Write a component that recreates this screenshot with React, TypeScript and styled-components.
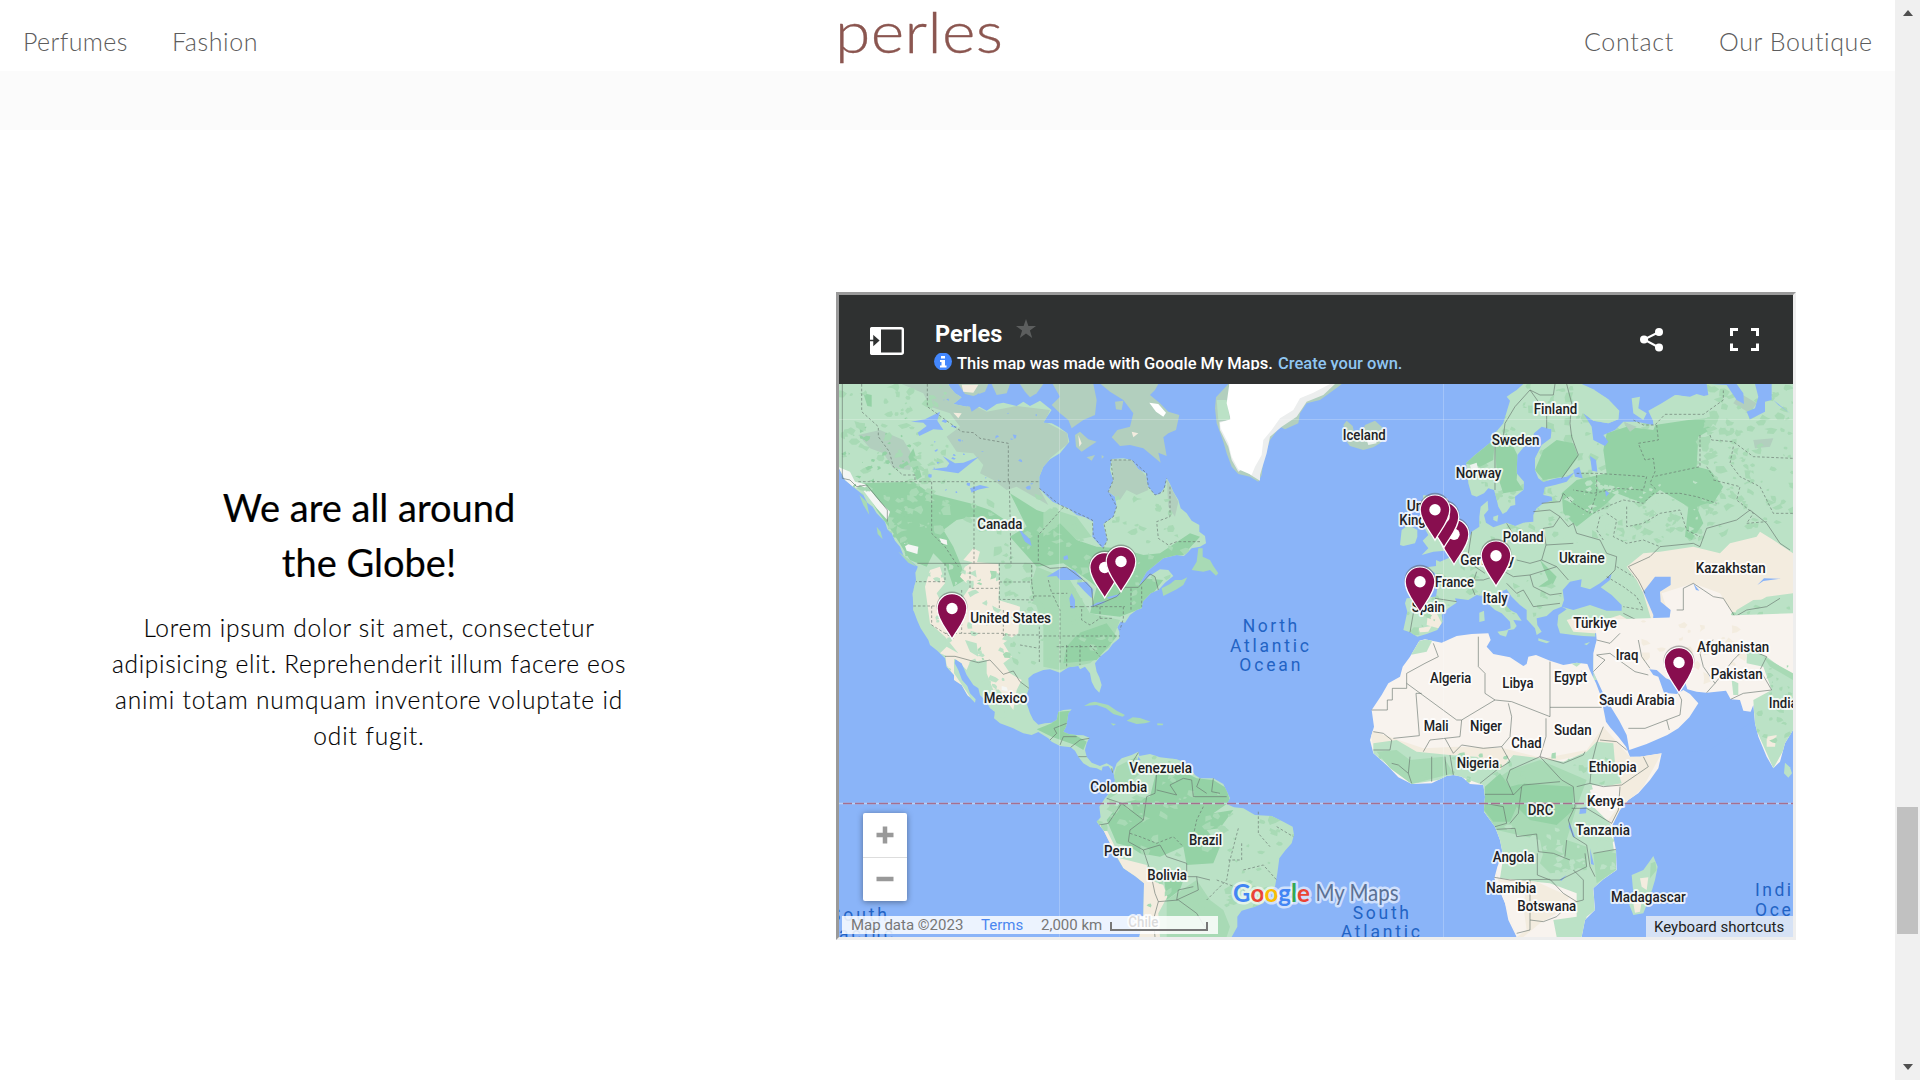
import React from 'react';
import styled, { createGlobalStyle } from 'styled-components';

const GlobalStyle = createGlobalStyle`
  * { box-sizing: border-box; }
  body { margin: 0; background: #fff; overflow: hidden; }
`;

const Window = styled.div`
  display: flex;
  width: 1920px;
  height: 1080px;
  overflow: hidden;
  font-family: Lato, 'Open Sans', sans-serif;
`;
const Page = styled.div`
  display: flex;
  flex-direction: column;
  width: 1895px;
`;
const Nav = styled.nav`
  display: grid;
  grid-template-columns: 812px 190px 1fr;
  height: 71px;
  padding: 0 21px 0 23px;
  background: #fff;
`;
const NavGroup = styled.div<{ $end?: boolean }>`
  display: flex;
  gap: 44px;
  padding-top: 23px;
  justify-content: ${p => (p.$end ? 'flex-end' : 'flex-start')};
`;
const NavLink = styled.a<{ $w: number; $ls: number }>`
  width: ${p => p.$w}px;
  font-size: 25px;
  font-weight: 300;
  line-height: 36px;
  letter-spacing: ${p => p.$ls}px;
  color: #5c5c5c;
  white-space: nowrap;
`;
const Logo = styled.a`
  width: 165px;
  font-size: 58px;
  font-weight: 300;
  line-height: 62px;
  height: 71px;
  letter-spacing: 0.3px;
  color: #8b5650;
  -webkit-text-stroke: 0.3px #8b5650;
  transform: scaleX(1.105);
  transform-origin: left;
`;
const Band = styled.div`
  height: 59px;
  background: #fbfbfb;
`;
const Section = styled.section`
  display: flex;
  align-items: flex-start;
  flex: 1;
  padding-top: 162px;
`;
const Copy = styled.div`
  width: 738px;
  margin-right: 98px;
  padding-top: 188px;
  text-align: center;
  color: #000;
`;
const Title = styled.h2`
  margin: 0 0 20px;
  font-size: 38px;
  font-weight: 400;
  line-height: 55px;
  -webkit-text-stroke: 0.2px #000;
`;
const Text = styled.p`
  margin: 0;
  font-size: 24.5px;
  font-weight: 300;
  line-height: 36px;
  -webkit-text-stroke: 0.15px #000;
`;
const Line = styled.span<{ $ls: number }>`
  display: block;
  letter-spacing: ${p => p.$ls}px;
  white-space: nowrap;
`;
const Frame = styled.div`
  width: 960px;
  height: 648px;
  border: 3px solid;
  border-color: #9a9a9a #eee #eee #9a9a9a;
  font-family: Roboto, sans-serif;
`;
const MapHeader = styled.header`
  display: flex;
  height: 89px;
  padding: 0 34px 0 31px;
  background: #2f3131;
  color: #fff;
`;
const PanelIcon = styled.svg`
  width: 34px;
  height: 28px;
  margin: 32px 30px 0 0;
`;
const MapTitles = styled.div`
  flex: 1;
  padding-top: 23px;
`;
const TitleRow = styled.div`
  display: flex;
  align-items: flex-start;
  height: 35px;
  padding-left: 1px;
`;
const MapName = styled.div`
  width: 81px;
  font-size: 23.5px;
  font-weight: 700;
  line-height: 32px;
`;
const Notice = styled.div`
  display: flex;
  height: 17px;
  overflow: hidden;
  font-size: 16.5px;
  font-weight: 500;
  line-height: 21px;
  white-space: nowrap;
`;
const NoticeText = styled.span<{ $w: number }>`
  width: ${p => p.$w}px;
`;
const Create = styled.a<{ $w: number }>`
  width: ${p => p.$w}px;
  color: #90c6f2;
`;
const Actions = styled.div`
  display: flex;
  gap: 66px;
  padding-top: 33px;
`;
const MapBody = styled.div`
  position: relative;
  height: 553px;
  overflow: hidden;
`;
const MapSvg = styled.svg`
  display: block;
  width: 954px;
  height: 553px;
`;
const ZoomBox = styled.div`
  position: absolute;
  left: 24px;
  top: 429px;
  width: 44px;
  height: 88px;
  display: flex;
  flex-direction: column;
  border-radius: 2px;
  background: #fff;
  box-shadow: 0 1px 6px rgba(0, 0, 0, 0.4);
`;
const ZoomButton = styled.div`
  flex: 1;
  display: grid;
  place-items: center;
  & + & { border-top: 1px solid #ddd; }
`;
const Legal = styled.div`
  position: absolute;
  left: 3px;
  top: 532px;
  width: 376px;
  height: 18px;
  display: flex;
  padding-left: 9px;
  background: rgba(255, 255, 255, 0.84);
  color: #777;
  font-size: 15px;
  line-height: 19px;
  white-space: nowrap;
`;
const LegalItem = styled.span<{ $w: number; $blue?: boolean }>`
  width: ${p => p.$w}px;
  color: ${p => (p.$blue ? '#4a86f0' : '#777')};
`;
const ScaleBar = styled.span`
  width: 98px;
  height: 9px;
  margin-top: 6px;
  border: 2px solid #777;
  border-top: 0;
`;
const Shortcuts = styled.div`
  position: absolute;
  right: 0;
  bottom: 0;
  width: 147px;
  height: 21px;
  padding-left: 8px;
  background: #d6e2f5;
  color: #222;
  font-size: 15px;
  line-height: 23px;
  white-space: nowrap;
`;
const Scroll = styled.div`
  display: flex;
  flex-direction: column;
  align-items: center;
  width: 25px;
  background: #f0f0f0;
`;
const Arrow = styled.div<{ $down?: boolean }>`
  width: 0;
  height: 0;
  margin-top: ${p => (p.$down ? 130 : 10)}px;
  border: 5.5px solid transparent;
  border-width: ${p => (p.$down ? '6px 5.5px 0' : '0 5.5px 6px')};
  border-${p => (p.$down ? 'top' : 'bottom')}-color: #505050;
`;
const Thumb = styled.div`
  width: 21px;
  height: 127px;
  margin-top: 791px;
  background: #c1c1c1;
`;

const LIGHT = '#bbe2c6';
const MID = '#a8dab5';
const DARK = '#94d2a5';
const TUNDRA = '#b2cfbe';
const SAND = '#f3ecdf';
const DESERT = '#f8f3ee';
const SEA = '#8ab4f8';

// West tile: three units to the pixel.
const NORTH_AMERICA =
  '27,12 27,265 45,300 78,328 100,345 112,368 128,380 140,400 165,425 172,448 185,460 195,482 210,500 222,530 245,545 264,560 256,578 258,600 248,640 250,690 262,722 272,745 295,780 300,795 322,812 345,835 350,860 372,885 372,900 395,915 412,945 435,968 437,958 420,940 412,918 396,900 385,870 374,850 376,838 395,850 410,885 430,915 445,925 450,945 470,965 480,985 495,995 492,1015 510,1030 550,1045 580,1060 605,1065 625,1056 655,1075 665,1085 690,1098 722,1102 735,1112 745,1130 760,1150 780,1162 800,1165 815,1172 818,1160 835,1158 850,1178 848,1160 830,1150 810,1158 785,1148 770,1130 765,1110 770,1090 778,1073 760,1066 740,1065 718,1063 700,1055 708,1040 712,1020 715,1000 725,988 700,990 685,995 680,1020 665,1028 645,1030 625,1034 610,1020 600,1000 590,970 590,945 597,925 595,895 610,882 640,870 660,868 690,878 715,862 745,858 750,868 765,860 780,880 785,905 795,925 808,938 815,915 808,892 800,875 795,850 810,830 835,810 848,792 868,775 868,755 862,742 872,725 885,728 900,705 920,690 935,685 938,665 962,640 985,630 1005,608 1030,588 1015,570 990,568 955,590 945,600 925,618 950,575 1000,535 1040,525 1062,528 1085,505 1110,500 1128,490 1125,468 1108,455 1108,435 1085,422 1070,400 1052,385 1045,360 1030,335 1020,312 1010,295 1005,320 990,342 975,345 955,320 950,305 948,280 925,268 905,240 880,235 845,237 840,270 850,300 835,335 855,350 860,380 850,410 820,432 832,480 818,505 800,485 787,470 790,425 765,412 740,405 715,385 690,375 668,365 650,348 628,325 628,290 640,260 660,238 690,220 718,185 712,160 685,140 665,130 640,128 650,112 665,90 630,62 600,78 580,65 560,78 520,68 500,72 470,92 430,70 410,80 370,72 395,52 375,40 360,22 355,12';
const SOUTH_AMERICA =
  '850,1178 860,1150 875,1135 905,1125 925,1115 928,1128 960,1122 990,1132 1040,1138 1060,1145 1080,1165 1095,1185 1110,1195 1150,1195 1180,1212 1200,1255 1190,1272 1212,1282 1240,1285 1275,1305 1325,1308 1360,1325 1388,1340 1392,1365 1385,1390 1365,1412 1348,1435 1342,1480 1335,1520 1310,1550 1300,1570 1270,1582 1235,1592 1222,1610 1222,1640 1205,1671 928,1671 940,1610 942,1510 915,1488 880,1465 862,1435 845,1400 820,1350 800,1325 812,1312 808,1280 825,1255 850,1225 855,1200';
const ISLANDS_WEST = [
  '762,978 780,968 795,965 835,975 860,992 885,1005 878,1010 850,1002 828,985 800,975',
  '890,1022 908,1012 930,1014 962,1025 945,1030 920,1032',
  '842,1030 858,1032 850,1037', '982,1030 1000,1031 998,1036 982,1036',
  '1085,570 1100,545 1105,505 1118,505 1118,530 1140,540 1150,558 1165,580 1158,587 1140,570 1120,575',
  '995,625 1020,612 1035,600 1055,600 1072,592 1060,615 1040,628 1000,648',
  '88,345 110,365 118,405 100,375', '140,440 152,455 158,478 143,462',
  '205,515 240,540 260,560 235,548',
];
const ARCTIC = [
  '385,12 450,12 475,12 465,35 430,48 405,42', '485,12 540,12 530,40 500,45',
  '570,12 640,12 620,40 600,52 585,35',
  '668,12 790,12 800,60 795,105 760,120 725,145 715,120 690,100 665,75 690,50',
  '812,12 870,12 985,12 975,30 960,45 990,70 1015,95 1048,105 1038,150 1015,160 1000,172 1010,228 985,218 992,248 940,205 900,195 870,198 845,172 862,150 900,140 910,100 880,60 840,35',
  '735,165 750,155 775,178 800,185 780,198 755,215 738,200', '770,232 795,225 785,242', '855,65 880,62 875,90 858,88', '815,225 822,230 815,236',
];
const LAKES_WEST = [
  '243,125 285,118 330,95 322,122 340,150 310,148 268,168 263,158 290,138 280,128',
  '305,268 350,262 358,250 338,228 375,250 400,248 447,230 412,258 385,280 345,274',
  '378,70 410,62 395,50 430,55 445,40 465,55 455,75 425,95 420,80',
  '560,430 580,460 600,478 605,498 585,485 570,455', '420,325 450,315 478,322 440,330 425,338',
  '650,590 680,572 700,560 735,572 758,598 725,600 690,600 680,588', '735,618 725,640 735,660 735,685 722,685 718,655',
  '740,608 770,605 790,630 785,655 762,632', '778,682 800,668 832,662 815,672', '830,652 870,642 862,650 836,656',
  '700,530 712,525 715,538 702,540', '925,1130 932,1140 922,1142',
];

// East tile.
const EURASIA =
  '490,12 470,30 455,40 440,50 450,62 440,95 430,130 405,160 398,182 370,205 345,225 318,250 322,275 325,310 335,345 350,350 372,340 385,325 402,330 408,350 415,380 428,402 440,395 452,378 466,375 465,350 490,330 492,305 470,280 472,225 492,200 515,190 522,160 545,140 575,148 572,175 545,195 525,235 525,270 535,295 550,305 590,295 620,290 645,275 620,305 585,315 555,322 550,345 575,350 578,362 550,370 530,385 520,405 520,425 490,428 465,438 440,428 400,442 378,428 372,405 385,390 383,362 362,380 358,410 358,440 335,455 325,480 300,505 275,530 240,545 228,540 228,558 200,562 225,580 235,605 228,650 200,652 140,655 135,670 142,695 130,750 150,757 172,770 200,762 232,750 248,725 245,705 265,685 290,668 285,655 325,660 350,645 372,648 385,672 405,690 425,700 450,725 452,745 435,752 462,748 470,738 460,720 485,722 470,700 450,690 432,668 412,640 440,628 455,650 480,675 500,690 500,718 525,745 530,765 545,755 532,735 530,715 560,708 580,690 605,680 620,688 595,705 592,735 600,760 640,765 670,768 715,770 705,800 700,842 700,900 1299,900 1299,12';
const MIDEAST =
  '855,-60 860,0 850,40 850,95 862,122 882,165 905,205 928,242 950,285 958,330 1010,312 1072,285 1105,265 1138,232 1165,190 1140,162 1120,150 1100,162 1062,158 1045,110 1030,105 1018,88 1040,90 1068,115 1105,130 1125,125 1132,148 1160,155 1190,158 1248,152 1262,178 1290,180 1300,212 1322,215 1330,195 1335,250 1345,290 1370,350 1390,385 1410,365 1425,310 1449,270 1449,-80';
const AFRICA =
  '328,2 345,-2 395,8 440,-12 485,-18 535,-20 542,0 530,20 550,42 600,52 640,78 650,72 655,50 678,45 720,62 760,75 800,68 832,72 840,92 858,130 875,175 880,205 888,245 900,262 925,290 948,320 960,350 990,350 1055,340 1045,385 1020,420 985,460 955,480 930,510 905,560 912,600 918,630 920,690 880,718 850,745 855,810 825,840 815,891 620,891 595,840 585,790 553,715 562,680 578,640 570,600 555,560 522,515 525,470 520,435 480,432 455,410 430,405 410,408 365,430 305,432 265,412 235,380 190,340 180,300 192,260 185,210 215,165 235,130 270,110 278,80 300,50';
const UK = '190,345 220,350 225,370 242,440 255,475 255,512 220,515 185,525 205,505 188,482 205,465 180,420';
const ISLANDS_EAST = [
  UK, '120,495 125,450 145,435 172,450 172,470 165,490 130,498', '358,698 372,692 374,722 358,726',
  '412,755 445,750 438,770 420,765', '535,775 570,785 560,790 535,782', '672,792 690,786 680,796',
  '872,22 885,18 890,30 878,40', '400,410 415,405 412,425 400,420',
];
const SEAS_EAST = [
  '605,680 612,660 608,630 630,605 665,598 662,620 690,628 720,610 755,582 750,600 722,622 755,645 785,675 785,692 740,692 690,675 640,690',
  '655,12 690,25 740,55 775,90 775,118 745,130 700,122 670,100 695,140 700,180 735,198 745,185 730,165 765,150 790,125 830,125 880,135 878,105 930,80 910,70 950,45 1000,55 1045,45 1040,12',
  '1050,12 1130,12 1150,40 1152,72 1130,60 1100,15', '1185,12 1235,12 1235,60 1215,65 1215,95 1170,118 1160,95 1185,85 1195,50',
  '1240,60 1290,100 1255,75', '640,270 658,260 668,295 645,290', '690,228 708,240 712,275 696,272',
  '850,635 885,590 932,590 932,615 900,635 902,665 932,690 928,720 942,745 938,768 895,760 878,738 880,705',
  '1000,610 1018,632 1008,630', '1192,615 1212,595 1262,596 1210,603', '735,330 748,340 738,350',
];
const KOLA_LAND = [
  '640,12 665,12 700,28 745,58 778,92 775,118 745,130 700,122 672,100 650,60',
  '815,55 840,50 835,85 860,100 850,120 820,100', '865,92 905,70 945,45 990,50 1010,42 1040,50 1050,110 885,135',
];

type Patch = [string, string];
const WEST_PATCHES: Patch[] = [
  [TUNDRA, '215,12 355,12 400,60 470,95 560,78 660,90 645,125 712,160 715,190 660,235 628,290 630,330 655,375 620,355 560,320 530,330 490,300 450,280 460,255 430,220 380,215 350,170 390,140 360,100 300,80 280,40'],
  [TUNDRA, '845,237 905,240 950,290 955,330 920,345 890,330 870,360 835,335 850,300'],
  [TUNDRA, '1010,295 1045,365 1035,410 1015,380'],
  [TUNDRA, '85,165 150,150 220,180 250,230 240,270 190,265 160,220 120,205'],
  [DARK, '95,310 250,305 300,340 420,370 480,390 540,430 430,410 380,420 340,450 370,500 395,560 405,600 370,620 350,560 310,520 290,560 240,540 190,460 140,390'],
  [DARK, '250,205 275,290 260,300 235,230'],
  [DARK, '100,40 125,45 125,80 112,78'],
  [DARK, '540,340 620,390 680,410 740,480 800,500 870,505 940,525 990,520 1080,460 1110,470 1060,525 1000,535 940,595 1000,600 935,685 870,710 780,700 800,620 760,590 700,550 620,560 540,470 590,440'],
  [MID, '660,385 740,410 785,470 740,480 690,430 640,470 640,400'],
  [MID, '620,560 720,600 780,700 870,720 840,800 780,850 690,870 640,860 640,740 600,620'],
  [DARK, '745,760 830,730 860,770 800,840 700,850 710,800'],
  [SAND, '300,570 330,560 345,610 320,640 345,690 400,650 420,620 390,590 405,560 430,545 505,552 510,600 505,660 570,680 565,760 520,790 545,830 520,850 540,880 575,900 560,930 550,990 520,950 490,930 470,880 470,840 420,845 410,870 380,840 330,820 350,800 385,820 345,770 300,730 285,620'],
  [SAND, '345,815 372,835 372,880 420,950 412,950 372,900 350,860'],
  [SAND, '400,540 430,505 450,515 440,550'],
  [LIGHT, '405,780 440,790 445,830 420,815'],
  ['#f4f6f4', '27,262 60,275 75,305 105,312 150,365 180,395 172,420 140,385 95,325 60,320 27,295'],
  ['#f4f6f4', '222,490 265,500 262,522 230,512'],
  ['#f4f6f4', '328,475 350,480 352,495 335,490'],
  ['#f4f6f4', '515,918 530,922 535,935 515,930'],
  [DARK, '685,995 722,992 710,1050 770,1085 760,1110 735,1095 665,1070 620,1048 665,1030'],
  [DARK, '980,1170 1080,1185 1100,1195 1150,1200 1190,1225 1200,1265 1150,1300 1210,1290 1170,1345 1130,1350 1170,1400 1150,1450 1070,1455 1060,1400 990,1430 930,1420 900,1400 860,1390 830,1320 870,1270 960,1250'],
  [DARK, '1000,1480 1060,1500 1050,1530 1010,1560'],
  [MID, '860,1160 920,1130 930,1180 880,1230 830,1260'],
  [MID, '1010,1560 1100,1500 1140,1560 1180,1590 1200,1640 1190,1671 1010,1671'],
  [SAND, '800,1325 830,1350 855,1400 870,1435 950,1455 960,1500 1000,1515 1012,1550 985,1600 990,1671 925,1671 940,1510 880,1465 845,1400'],
];
const EAST_PATCHES: Patch[] = [
  [DARK, '740,160 800,140 880,150 890,125 1050,115 1050,150 1015,170 1010,260 1050,270 1090,320 1060,370 1010,380 1030,430 995,480 975,470 985,380 900,330 850,370 770,340 740,370 650,440 610,400 605,340 650,300 740,280 730,210'],
  [DARK, '550,210 590,180 640,190 655,230 610,290 550,300 525,270'],
  [DARK, '405,190 440,160 475,230 470,300 490,330 430,340 410,280'],
  [DARK, '310,250 370,205 405,170 400,240 360,260'],
  [DARK, '540,540 590,590 575,620 535,620 565,600'],
  [TUNDRA, '1140,40 1190,70 1170,100 1120,70'], [TUNDRA, '1180,180 1240,175 1230,200 1185,205'], [TUNDRA, '790,125 830,140 810,155'],
  [SAND, '800,560 850,520 900,515 1000,500 1080,520 1110,490 1190,470 1200,455 1240,480 1299,520 1299,640 1220,650 1150,690 1120,720 1180,760 1299,760 1299,900 850,900 800,780 840,720 880,740 850,640 830,600'],
  [DESERT, '905,640 1000,610 1080,640 1125,710 1120,760 1000,745 935,765 925,700'],
  [LIGHT, '1130,690 1180,660 1299,655 1280,690 1200,710 1160,760 1110,730'],
  [SAND, '620,720 660,708 700,730 780,705 840,740 820,765 700,760 640,755'],
  [LIGHT, '860,740 930,775 1000,750 970,780 900,775'],
  [SAND, '205,690 230,700 245,730 235,745 200,735'], [SAND, '175,745 215,738 205,755 180,757'],
  ['#eef2ef', '330,255 350,248 355,270 338,285'],
];
const SOUTH_PATCHES: Patch[] = [
  [LIGHT, '328,2 370,-5 350,35 300,45'],
  [SAND, '180,270 250,295 340,325 440,320 580,325 700,355 830,330 880,260 960,350 1055,340 1000,440 930,510 900,560 880,500 840,430 860,310 820,345 700,370 600,350 570,400 500,350 420,345 300,340 190,325'],
  [LIGHT, '190,310 260,300 320,335 420,345 500,350 570,390 610,345 690,355 760,365 830,335 860,305 910,310 915,370 935,430 880,440 840,450 850,500 900,550 920,690 850,745 855,810 830,830 815,891 740,891 730,840 800,830 800,760 720,730 570,715 580,650 520,510 520,435 450,410 305,432 190,340'],
  [MID, '200,335 260,330 300,360 400,350 430,400 305,432 240,385'],
  [MID, '600,390 690,360 830,420 800,500 770,600 700,650 690,600 560,570 520,510 525,440'],
  [DARK, '525,440 570,400 600,440 640,430 790,440 790,510 740,555 660,540 620,500 600,545 550,545 522,510'],
  [MID, '700,640 770,600 830,620 830,690 720,700 690,670'], [MID, '850,640 918,630 918,690 860,730'],
  [DESERT, '845,435 930,440 925,500 895,540 860,490'],
  [SAND, '555,690 565,715 680,725 780,770 740,820 690,850 640,891 620,891 585,790'],
  [DESERT, '560,725 650,730 640,800 650,870 620,891 585,790'],
  [LIGHT, '1310,20 1370,50 1449,110 1449,280 1390,385 1335,260 1330,180 1385,150 1360,80 1310,70'],
  [SAND, '1370,290 1400,285 1395,320 1370,320'],
  [MID, '1360,50 1449,100 1449,120 1380,80'],
  [LIGHT, '1265,120 1285,130 1285,165 1270,165'],
  [LIGHT, '780,68 815,68 800,80'],
];

const WEST_DASHED = [
  'M95,12V95L145,140L145,170L178,215L190,260L218,285L255,285V305', 'M85,305H628', 'M292,12V80L395,155L430,158L450,175L535,190V305',
  'M305,305V460L345,500L385,560', 'M432,305V550', 'M538,305L543,550', 'M700,382L625,465V545',
  'M628,325L690,375L787,420L790,470L820,505L832,480L822,430L850,410L860,380L835,335L850,300L842,240L905,240L950,280L955,320L975,345L1000,335L1010,295',
  'M1020,320V410L980,425L985,475L1015,495L1040,485H1110', 'M508,550V690M508,606H605V550M605,606L612,660L508,658M612,648H670',
  'M420,560V625H508M345,605H258M345,550V605M250,678H345M305,678V735L370,775M395,630V760M345,760H520M520,690V770M520,765H628M628,740V850M570,795L628,805',
  'M628,768H870M670,648L690,690V850M720,680L755,680V720L780,735L810,715H850M755,680H885M880,680V715L870,750M680,800H830M710,795V860M750,795V855M780,795L810,830M655,600L665,640H712M810,680V715M903,625V690M935,620V680',
  'M900,1360L930,1370L980,1390L1030,1370L1060,1400M1120,1280L1100,1320L1085,1390M1225,1345L1200,1440L1190,1500L1130,1560M1235,1390V1440H1195M1285,1295V1360L1320,1400M1340,1340L1390,1370M1240,1470L1300,1455L1340,1500M1160,1500L1240,1530L1290,1570',
];
const WEST_SOLID = [
  'M37,12V295L60,300L80,320L110,315L172,390V425', 'M262,550H628L660,565L710,562L760,600L785,625L790,680L860,650L885,622H925L960,582L975,590L985,630',
  'M345,829H375L445,848L480,840L520,883L550,873L570,905L597,925', 'M660,1080L680,1060L672,1045L710,1030M690,1095L700,1070H740M722,1102L750,1080L778,1075M745,1130H770M848,1178L845,1165',
  'M925,1118L905,1150L935,1175L980,1180L975,1240L950,1250L940,1320L875,1270L830,1255M980,1230L1040,1245L1020,1215L1060,1195L1085,1200L1090,1250H1190M1110,1195L1100,1220L1130,1240M1150,1195L1145,1235L1170,1240M875,1270L835,1330L808,1335M940,1320L900,1350L895,1385L940,1410L960,1470M940,1410L990,1395L1010,1430L1070,1450V1490L1100,1490L1105,1530L1040,1560L1045,1530L1090,1520M960,1470L975,1540L985,1565L1045,1560L1100,1600L1130,1650M985,1565L970,1620L975,1671M1100,1490L1140,1500',
];
const EAST_SOLID = [
  'M405,330V190L430,170L435,130L465,80L510,30L560,100V145M510,30L540,45L580,45L585,12M620,12L635,70L630,130L635,170L655,225L605,295',
  'M545,370L600,365L610,340M520,395L570,390L600,410L580,440L550,445M600,410L625,440L640,430L650,460L720,480L740,520L770,530L765,570L740,595M550,445L558,495L640,490M558,495L545,540L590,560L625,600M470,540L510,550L545,540M335,455L325,520L345,560L375,580M440,430L470,480M425,570L460,590L510,585L590,560M510,585L520,620L570,645L605,640M440,610L470,640L490,630L520,680L600,670M225,655L290,665M350,575L335,620L345,645M155,665L160,700L150,757M345,600L370,600L400,590',
  'M1020,500L1040,445L1130,420L1170,390L1220,430L1260,490L1290,510M1020,500L1000,490L900,500L870,530L805,560L835,600L855,640M970,690V625L1000,610L1030,630L1060,650L1090,655L1125,710L1160,690L1220,680L1260,655M970,690L950,690M935,765L1000,740L1040,760L1110,760L1160,740L1200,760M790,700L830,720L850,740L880,740M820,720L830,790L850,830M720,770L820,760M715,780L705,820',
];
const SOUTH_SOLID = [
  'M185,210H232V180H247V145H290V100L345,70L385,50L370,10M290,130L440,240H455L555,180L605,185L720,230V65M720,202H875M318,160L328,287L250,295M318,160H335M505,-10V80L525,100V160L555,180M595,190L605,230L600,290L575,320M708,235V290L690,350L760,370L820,345L825,335M455,240L450,290L360,300L340,335M405,295L430,340L455,315L520,325L575,320L600,365L560,390L510,430M190,275L220,280L245,300L240,330H190M245,370L265,375L295,400M300,350L295,400L305,430M365,350V425M405,350L410,405M420,345L430,405M600,390L690,350L755,420L790,440L795,500L775,540L790,590L830,615L840,680L855,710M600,390L590,420L610,465L640,435L750,425M525,463H610M525,490L580,500L590,550L555,560M635,440L625,520L600,550M560,568L615,565L620,590L680,582L685,635L730,640L780,660M682,640V705L720,720L750,720L830,680L825,640M553,712L600,720L720,718L760,760L800,785M660,720V870L620,880M660,840L700,845L740,830L780,790L820,780V720L790,690M880,260L860,310L845,370L840,430L880,440L935,435L1015,380L1000,350M840,430L800,440M930,440L925,510L905,550L830,505H785M870,300L920,305L950,330M850,640L918,628M770,600L765,650',
  'M850,95L885,60L860,45L900,40L940,70L975,95L1015,105M860,0L900,10L930,-20M985,0L995,50L1020,85M955,265L1005,265L1070,240L1110,225L1115,180L1105,160M1070,240L1078,270M1190,158L1215,130L1180,80L1170,40L1185,10L1210,0M1215,130L1270,60L1300,30M1262,178L1300,160L1385,150L1350,90L1370,50L1320,30',
];
const EAST_DASHED = [
  'M820,120L850,135L885,135L915,103H1030L1090,60V30M890,135L895,180L835,190L855,240L880,235L885,275L870,310L890,330M1020,165V260L880,290M1050,165L1055,180L1120,185L1180,230L1299,235M1060,290L1040,260M650,280L710,280L790,285L860,290L850,330L770,325L700,340L640,330M710,285V340L690,400L640,370L610,340M700,400L740,380L790,360L850,370L880,340L960,340L1010,350L1070,370M720,410L710,450L730,480M740,400L770,420L760,470L800,490L850,480L900,500M800,380V440L850,430L900,400L960,390L980,450L1020,470M1060,300L1140,320L1130,360L1180,400L1160,430L1220,425M1120,200L1110,250L1140,290L1200,320L1240,400L1299,400M740,590L790,620L830,650L850,690L790,680M770,560L820,590',
];

function speckles(seed: number, count: number, x0: number, y0: number, w: number, h: number, size: number) {
  let s = seed;
  const rnd = () => {
    s = (s * 16807) % 2147483647;
    return s / 2147483647;
  };
  let d = '';
  for (let i = 0; i < count; i++) {
    const cx = x0 + rnd() * w;
    const cy = y0 + rnd() * h;
    const r = size * (0.3 + rnd());
    const n = 6;
    for (let k = 0; k < n; k++) {
      const a = (k / n) * Math.PI * 2;
      const q = r * (0.25 + rnd());
      d += `${k ? 'L' : 'M'}${(cx + Math.cos(a) * q * 1.3).toFixed(1)},${(cy + Math.sin(a) * q).toFixed(1)}`;
    }
    d += 'Z';
  }
  return d;
}

const Polys = ({ items, fill }: { items: string[]; fill: string }) => (
  <>{items.map(p => <polygon key={p} points={p} fill={fill} />)}</>
);
const Patches = ({ items }: { items: Patch[] }) => (
  <>{items.map(([c, p]) => <polygon key={p} points={p} fill={c} />)}</>
);
const Borders = ({ items, dashed }: { items: string[]; dashed?: boolean }) => (
  <>{items.map(d => (
    <path key={d} d={d} fill="none" stroke="#65736c" strokeOpacity={0.85} strokeWidth={2.2} strokeDasharray={dashed ? '8 6' : undefined} />
  ))}</>
);

type Label = [string, number, number, number];
const LABELS: Label[] = [
  ['Canada', 977.3, 528.6, 45], ['United States', 970.3, 623.3, 80.7], ['Mexico', 983.7, 703.4, 43.7],
  ['Venezuela', 1129.3, 773.4, 62.7], ['Colombia', 1090.3, 792, 57], ['Peru', 1104, 855.6, 27.7],
  ['Brazil', 1189, 845, 33], ['Bolivia', 1147.3, 880.4, 39.7], ['Chile', 1128.3, 927, 30],
  ['Iceland', 1342.7, 440.2, 43], ['Finland', 1533.7, 414, 43.7], ['Sweden', 1491.7, 445.3, 47.7],
  ['Norway', 1455.7, 477.6, 45.7], ['United', 1406.7, 511, 40], ['Kingdom', 1399.3, 524.7, 53],
  ['Poland', 1502.7, 541.6, 41], ['Germany', 1460.3, 564.6, 53.7], ['Ukraine', 1559, 563.3, 45.7],
  ['France', 1435, 587.3, 39], ['Spain', 1411.7, 612, 33.3], ['Italy', 1482.7, 603.2, 25],
  ['Türkiye', 1573.3, 627.6, 43.7], ['Kazakhstan', 1695.7, 573, 70], ['Afghanistan', 1697, 652.3, 72.3],
  ['Iraq', 1615.7, 659.6, 22.7], ['Pakistan', 1710.7, 679.3, 52], ['India', 1768.7, 708, 29],
  ['Egypt', 1554, 681.6, 33.3], ['Algeria', 1430, 683.3, 41.3], ['Libya', 1502.3, 688.3, 31.3],
  ['Saudi Arabia', 1599, 705.3, 75.7], ['Mali', 1423.7, 731, 25], ['Niger', 1470, 731, 32],
  ['Sudan', 1554, 735, 37.7], ['Chad', 1511.3, 748.3, 30.3], ['Nigeria', 1456.7, 767.6, 42.3],
  ['Ethiopia', 1588.7, 772, 48], ['Kenya', 1587, 806.3, 36.7], ['DRC', 1527.7, 815, 25.7],
  ['Tanzania', 1575.7, 835.4, 54.3], ['Angola', 1492.7, 861.6, 41.7], ['Namibia', 1486.3, 892.6, 50],
  ['Botswana', 1517.3, 910.6, 59], ['Madagascar', 1611, 901.6, 74.7],
];
const OCEANS: Label[] = [
  ['North', 1242.7, 631.7, 54.5], ['Atlantic', 1230, 651.7, 79], ['Ocean', 1239.3, 671.3, 61],
  ['South', 1352.7, 918.7, 56.3], ['Atlantic', 1340.7, 938, 79.3], ['Indi', 1755, 896, 36],
  ['Oce', 1755, 916.3, 35.7], ['South', 830, 921, 57], ['Pacific', 825, 940, 68],
];
const PINS = [
  [952, 636], [1104.7, 595], [1121, 589], [1454, 561.7], [1444, 544.5], [1435, 537.3], [1420, 609.3], [1496, 583.3], [1679, 690],
];
const GOOGLE = [['G', '#4285f4'], ['o', '#ea4335'], ['o', '#fbbc04'], ['g', '#4285f4'], ['l', '#34a853'], ['e', '#ea4335']];

const WorldMap = () => (
  <MapSvg viewBox="839 384 954 553">
    <defs>
      <clipPath id="west">
        {[NORTH_AMERICA, SOUTH_AMERICA].map(p => <polygon key={p} points={p} />)}
      </clipPath>
      <clipPath id="east"><polygon points={EURASIA} /></clipPath>
      <clipPath id="south">
        <polygon points={MIDEAST} />
        <polygon points={AFRICA} />
      </clipPath>
    </defs>
    <rect x="839" y="384" width="954" height="553" fill={SEA} />
    <g transform="translate(830 380) scale(.33333)">
      <Polys items={[NORTH_AMERICA, SOUTH_AMERICA]} fill={LIGHT} />
      <g clipPath="url(#west)">
        <Patches items={WEST_PATCHES} />
        <path d={speckles(7, 130, 30, 20, 330, 500, 12)} fill={MID} />
        <path d={speckles(97, 60, 30, 100, 220, 450, 8)} fill={DARK} />
        <path d={speckles(11, 160, 400, 350, 700, 500, 12)} fill={MID} />
        <path d={speckles(19, 70, 230, 560, 350, 450, 12)} fill={LIGHT} />
        <path d={speckles(23, 110, 800, 1120, 600, 550, 12)} fill={MID} />
        <path d={speckles(29, 40, 300, 20, 400, 330, 6)} fill={SEA} />
      </g>
      <Polys items={ISLANDS_WEST} fill={MID} />
      <Polys items={ARCTIC} fill={TUNDRA} />
      <Polys items={LAKES_WEST} fill={SEA} />
      <Polys items={['395,14 445,14 430,38 400,35', '370,98 395,100 385,115', '905,155 925,160 910,172', '745,165 755,190 748,200']} fill={SAND} />
      <polygon fill={TUNDRA} points="1195,12 1158,52 1155,85 1160,130 1180,185 1190,220 1205,260 1225,282 1260,290 1285,305 1295,285 1300,240 1310,210 1320,180 1350,140 1365,148 1405,130 1410,100 1430,70 1470,60 1525,20 1535,12" />
      <polygon fill={LIGHT} points="1160,60 1190,60 1200,120 1165,120" />
      <polygon fill="#eceeee" points="1198,12 1515,12 1480,45 1430,65 1400,110 1355,140 1320,170 1310,220 1290,285 1290,302 1262,285 1240,265 1225,275 1205,240 1195,200 1170,150 1168,125 1200,120" />
      <polygon fill="#fff" points="1198,12 1500,12 1450,38 1410,55 1390,90 1350,115 1325,150 1300,180 1295,225 1275,260 1265,285 1225,268 1205,230 1195,190 1172,145 1170,128 1202,118 1190,70" />
      <polygon fill="#fff" points="958,68 985,72 1008,98 1000,110 978,95" />
      <polygon fill={TUNDRA} points="1540,135 1550,122 1568,138 1572,155 1600,148 1605,135 1635,122 1655,140 1670,165 1650,190 1630,202 1600,210 1560,198 1550,185 1565,178 1550,160" />
      <polygon fill="#eef3f0" points="1610,180 1635,172 1640,190 1615,195" />
      <Borders items={WEST_DASHED} dashed />
      <Borders items={WEST_SOLID} />
    </g>
    <g transform="translate(1360 380) scale(.33333)">
      <Polys items={[EURASIA, ...ISLANDS_EAST]} fill={LIGHT} />
      <g clipPath="url(#east)">
        <path d={speckles(31, 260, 300, 12, 800, 480, 13)} fill={MID} />
        <Patches items={EAST_PATCHES} />
        <path d={speckles(37, 90, 620, 300, 400, 200, 9)} fill={LIGHT} />
        <path d={speckles(41, 110, 1030, 20, 270, 420, 12)} fill={MID} />
        <path d={speckles(43, 60, 130, 560, 480, 200, 11)} fill={MID} />
        <path d={speckles(47, 40, 1120, 680, 180, 160, 9)} fill={MID} />
      </g>
      <Polys items={SEAS_EAST} fill={SEA} />
      <Polys items={KOLA_LAND} fill={LIGHT} />
      <Borders items={EAST_SOLID} />
      <Borders items={EAST_DASHED} dashed />
    </g>
    <g transform="translate(1310 640) scale(.33333)">
      <polygon points="855,-20 862,60 850,95 880,165 950,300 960,350 1200,330 1335,240 1449,380 1449,150 1300,60 1000,60 870,-20" fill={SEA} />
      <polygon points={MIDEAST} fill={DESERT} />
      <polygon points={AFRICA} fill={DESERT} />
      <g clipPath="url(#south)">
        <Patches items={SOUTH_PATCHES} />
        <path d={speckles(53, 50, 530, 560, 400, 140, 12)} fill={LIGHT} />
        <path d={speckles(59, 40, 200, 340, 700, 90, 9)} fill={MID} />
        <path d={speckles(61, 24, 1000, -60, 300, 180, 14)} fill={SAND} />
        <path d={speckles(67, 26, 1340, 60, 110, 260, 9)} fill={MID} />
      </g>
      <Polys items={['965,705 1000,690 1018,665 1030,648 1043,680 1035,720 1020,770 1000,820 970,825 958,795 970,760', '1425,368 1440,382 1446,400 1435,413 1422,400']} fill={LIGHT} />
      <polygon points="990,715 1015,712 1010,750 995,740" fill={SAND} />
      <polygon points="970,790 995,785 990,815 975,818" fill={SAND} />
      <polygon points="1022,670 1036,665 1040,690 1020,715" fill={MID} />
      <Polys items={['810,505 830,500 828,520 808,522', '778,545 795,590 790,592 776,560', '840,625 852,675 843,672', '815,90 822,110 816,108', '748,720 770,705 755,722']} fill={SEA} />
      <Borders items={SOUTH_SOLID} />
    </g>
    <path d="M1059.5,384V937M1443.5,384V937M839,419.5H1793" stroke="#fff" strokeOpacity=".22" />
    <path d="M839,803.5H1793" stroke="#dbe4f5" strokeOpacity=".6" strokeWidth="1.4" />
    <path d="M843,803.5H1793" stroke="#a6708f" strokeWidth="1.4" strokeDasharray="9 3" />
    {OCEANS.map(([t, x, y, w], i) => (
      <text key={i} x={x} y={y} textLength={w} fontSize="17.5" fill="#2263c4">{t}</text>
    ))}
    {LABELS.map(([t, x, y, w]) => (
      <text key={t} x={x} y={y} textLength={w} lengthAdjust="spacingAndGlyphs" fontSize="14" fontWeight="500" fill="#202124" stroke="#fff" strokeOpacity=".8" strokeWidth="3.8" strokeLinejoin="round" paintOrder="stroke">{t}</text>
    ))}
    {PINS.map(([x, y]) => (
      <g key={x} transform={`translate(${x} ${y + 1})`}>
        <path d="M0,2C-3,-6-15.500,-16-15.500,-29A15.500,15.500 0 0 1 15.500,-29C15.500,-16 3,-6 0,2Z" fill="#555" opacity=".45" transform="translate(0 -1)" />
        <path d="M0,2C-4,-6-14.800,-17-14.800,-28.500A14.800,14.800 0 0 1 14.800,-28.500C14.800,-17 4,-6 0,2Z" fill="#880e4f" stroke="#fff" strokeWidth="1.2" />
        <circle cy="-28.500" r="5.700" fill="#fff" />
      </g>
    ))}
    <g fontFamily="Lato, sans-serif" stroke="#fff" strokeOpacity=".6" strokeWidth="5" strokeLinejoin="round" paintOrder="stroke">
      <text x="1233" y="901.500" fontSize="25.500" textLength="77" lengthAdjust="spacingAndGlyphs" fontWeight="700">
        {GOOGLE.map(([c, f], i) => <tspan key={i} fill={f}>{c}</tspan>)}
      </text>
      <text x="1315.500" y="901" fontSize="23.500" textLength="83" lengthAdjust="spacingAndGlyphs" fill="#5b7194">My Maps</text>
    </g>
  </MapSvg>
);

export default function App() {
  return (
    <>
      <GlobalStyle />
      <Window>
        <Page>
          <Nav>
            <NavGroup>
              <NavLink $w={105} $ls={0.4}>Perfumes</NavLink>
              <NavLink $w={87} $ls={0.6}>Fashion</NavLink>
            </NavGroup>
            <Logo>perles</Logo>
            <NavGroup $end>
              <NavLink $w={91} $ls={0.7}>Contact</NavLink>
              <NavLink $w={155} $ls={0.6}>Our Boutique</NavLink>
            </NavGroup>
          </Nav>
          <Band />
          <Section>
            <Copy>
              <Title>
                <Line $ls={0}>We are all around</Line>
                <Line $ls={0}>the Globe!</Line>
              </Title>
              <Text>
                <Line $ls={0.73}>Lorem ipsum dolor sit amet, consectetur</Line>
                <Line $ls={0.7}>adipisicing elit. Reprehenderit illum facere eos</Line>
                <Line $ls={0.83}>animi totam numquam inventore voluptate id</Line>
                <Line $ls={0.9}>odit fugit.</Line>
              </Text>
            </Copy>
            <Frame>
              <MapHeader>
                <PanelIcon viewBox="0 0 34 28">
                  <rect x="1.200" y="1.200" width="31.600" height="25.600" rx="1.500" fill="none" stroke="#fff" strokeWidth="2.400" />
                  <rect x="0" y="0" width="11" height="28" rx="2" fill="#fff" />
                  <path d="M0,13.500H5M4,9.500L8.500,13.500L4,17.500Z" fill="#2f3131" stroke="#2f3131" strokeWidth="1.500" />
                </PanelIcon>
                <MapTitles>
                  <TitleRow>
                    <MapName>Perles</MapName>
                    <svg width="20" height="22" viewBox="0 0 20 20">
                      <path d="M10,0L12.400,7H20L13.900,11.500L16.200,19L10,14.500L3.800,19L6.100,11.500L0,7H7.600Z" fill="#5c5e5e" />
                    </svg>
                  </TitleRow>
                  <Notice>
                    <svg width="23" height="18" viewBox="0 0 23 18">
                      <circle cx="9" cy="8.500" r="9" fill="#4387fd" />
                      <path d="M7,3H11V5.500H7ZM6,7H11V12.500H12.500V14.500H6V12.500H7.500V9H6Z" fill="#fff" />
                    </svg>
                    <NoticeText $w={321}>This map was made with Google My Maps.</NoticeText>
                    <Create $w={130}>Create your own.</Create>
                  </Notice>
                </MapTitles>
                <Actions>
                  <svg width="24" height="24" viewBox="0 0 24 24">
                    <path d="M19,4L4,11.500L19,19.500" fill="none" stroke="#fff" strokeWidth="2" />
                    <circle cx="19" cy="4" r="4" fill="#fff" />
                    <circle cx="4" cy="11.500" r="4" fill="#fff" />
                    <circle cx="19" cy="19.500" r="4" fill="#fff" />
                  </svg>
                  <svg width="29" height="24" viewBox="0 0 29 24">
                    <path d="M1.500,8V1.500H8M21,1.500H27.500V8M27.500,15.500V21.500H21M8,21.500H1.500V15.500" fill="none" stroke="#fff" strokeWidth="3" />
                  </svg>
                </Actions>
              </MapHeader>
              <MapBody>
                <WorldMap />
                <ZoomBox>
                  <ZoomButton>
                    <svg width="18" height="18"><path d="M9,0.500V17.500M0.500,9H17.500" stroke="#999" strokeWidth="4.500" /></svg>
                  </ZoomButton>
                  <ZoomButton>
                    <svg width="18" height="18"><path d="M0.500,9H17.500" stroke="#999" strokeWidth="4.500" /></svg>
                  </ZoomButton>
                </ZoomBox>
                <Legal>
                  <LegalItem $w={130}>Map data ©2023</LegalItem>
                  <LegalItem $w={60} $blue>Terms</LegalItem>
                  <LegalItem $w={69}>2,000 km</LegalItem>
                  <ScaleBar />
                </Legal>
                <Shortcuts>Keyboard shortcuts</Shortcuts>
              </MapBody>
            </Frame>
          </Section>
        </Page>
        <Scroll>
          <Arrow />
          <Thumb />
          <Arrow $down />
        </Scroll>
      </Window>
    </>
  );
}
